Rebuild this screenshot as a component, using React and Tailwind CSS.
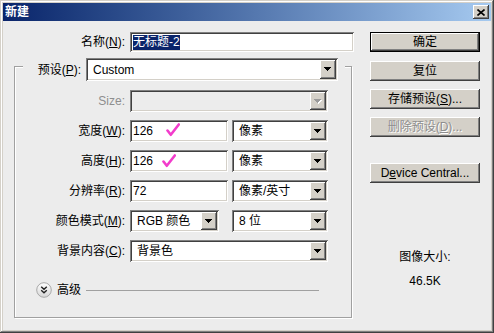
import React from 'react';

// Win classic bevels
const raised = 'shadow-[inset_-1px_-1px_#404040,inset_1px_1px_#ffffff,inset_-2px_-2px_#808080,inset_2px_2px_#d4d0c8]';
const sunken = 'shadow-[inset_1px_1px_#808080,inset_-1px_-1px_#ffffff,inset_2px_2px_#404040,inset_-2px_-2px_#d4d0c8]';

const Arrow = ({ disabled }) => (
    <svg width="8" height="5" viewBox="0 0 8 5" className="block">
        {disabled && (
            <g fill="#ffffff">
                <rect x="1" y="1" width="7" height="1" />
                <rect x="2" y="2" width="5" height="1" />
                <rect x="3" y="3" width="3" height="1" />
                <rect x="4" y="4" width="1" height="1" />
            </g>
        )}
        <g fill={disabled ? '#9a9a9a' : '#000000'}>
            <rect x="0" y="0" width="7" height="1" />
            <rect x="1" y="1" width="5" height="1" />
            <rect x="2" y="2" width="3" height="1" />
            <rect x="3" y="3" width="1" height="1" />
        </g>
    </svg>
);

const Combo = ({ className, value, disabled }) => (
    <div className={`flex items-stretch p-[2px] ${disabled ? 'bg-[#ececec]' : 'bg-white'} ${sunken} ${className}`}>
        <div className="flex-1 flex items-center pl-[5px] whitespace-nowrap leading-[14px]">{value}</div>
        <div className={`w-[16px] bg-[#d4d0c8] flex items-center justify-center ${raised}`}>
            <Arrow disabled={disabled} />
        </div>
    </div>
);

const Input = ({ className, children }) => (
    <div className={`relative flex items-center bg-white pl-[3px] leading-[14px] ${sunken} ${className}`}>
        {children}
    </div>
);

const Check = ({ className }) => (
    <svg width="14" height="14" viewBox="0 0 14 14" className={`absolute ${className}`}>
        <path d="M1.5 7.5 L4.8 11.8 L12.8 1.5" fill="none" stroke="#f23ccb" strokeWidth="2.6" strokeLinecap="round" strokeLinejoin="round" />
    </svg>
);

const Label = ({ children, gray }) => (
    <div className={`w-[115px] pr-[5px] text-right whitespace-nowrap leading-[14px] ${gray ? 'text-[#8e8e8e]' : ''}`}>
        {children}
    </div>
);

const Btn = ({ children, disabled, def }) => (
    <div className={`w-[110px] h-[20px] ${def ? 'border border-black' : ''}`}>
        <div className={`w-full h-full bg-[#d4d0c8] flex items-center justify-center leading-[14px] ${raised} ${disabled ? 'text-[#8e8e8e] [text-shadow:1px_1px_0_#ffffff]' : ''}`}>
            {children}
        </div>
    </div>
);

export default function App() {
    return (
        <div className={`w-[494px] h-[333px] bg-[#d4d0c8] p-[3px] flex flex-col shadow-[inset_-1px_-1px_#404040,inset_1px_1px_#d4d0c8,inset_-2px_-2px_#808080,inset_2px_2px_#ffffff] font-['Liberation_Sans','Noto_Sans_CJK_SC',sans-serif] text-[12px] text-black`}>
            {/* title bar */}
            <div className="h-[18px] flex items-center bg-linear-to-r from-[#0a246a] to-[#a6caf0] pl-[2px] pr-[2px]">
                <span className="font-bold text-white leading-none">新建</span>
                <div className={`ml-auto w-[16px] h-[14px] bg-[#d4d0c8] flex items-center justify-center ${raised}`}>
                    <svg width="8" height="7" viewBox="0 0 8 7" className="block">
                        <path d="M0.5 0.5 L7.5 6.5 M7.5 0.5 L0.5 6.5" stroke="#000" strokeWidth="1.6" />
                    </svg>
                </div>
            </div>

            <div className="flex-1 bg-[#ececec] flex">
                {/* left column */}
                <div className="w-[367px] pt-[11px]">
                    <div className="flex items-center h-[20px]">
                        <div className="w-[127px] pr-[5px] text-right whitespace-nowrap leading-[14px]">名称(<span className="underline">N</span>):</div>
                        <Input className="w-[224px] h-[20px]">
                            <span className="bg-[#0a246a] text-white leading-[15px]">无标题-2</span>
                        </Input>
                    </div>

                    <div className="ml-[11px] mt-[14px] w-[338px] h-[252px] border border-[#a0a0a0] shadow-[inset_1px_1px_#ffffff,1px_1px_#ffffff]">
                        {/* preset row sits over the top edge */}
                        <div className="-mt-[9px] ml-[8px] w-[322px] h-[23px] bg-[#ececec] flex items-center">
                            <div className="w-[63px] pr-[5px] text-right whitespace-nowrap leading-[14px]">预设(<span className="underline">P</span>):</div>
                            <Combo className="w-[252px] h-[23px]" value="Custom" />
                        </div>

                        <div className="mt-[9px] flex items-center h-[22px]">
                            <Label gray>Size:</Label>
                            <Combo className="w-[198px] h-[22px]" value="" disabled />
                        </div>

                        <div className="mt-[8px] flex items-center h-[22px]">
                            <Label>宽度(<span className="underline">W</span>):</Label>
                            <Input className="w-[98px] h-[22px]">
                                126
                                <Check className="left-[36px] top-[3px]" />
                            </Input>
                            <Combo className="ml-[4px] w-[96px] h-[22px]" value="像素" />
                        </div>

                        <div className="mt-[8px] flex items-center h-[22px]">
                            <Label>高度(<span className="underline">H</span>):</Label>
                            <Input className="w-[98px] h-[22px]">
                                126
                                <Check className="left-[32px] top-[4px]" />
                            </Input>
                            <Combo className="ml-[4px] w-[96px] h-[22px]" value="像素" />
                        </div>

                        <div className="mt-[8px] flex items-center h-[22px]">
                            <Label>分辨率(<span className="underline">R</span>):</Label>
                            <Input className="w-[98px] h-[22px]">72</Input>
                            <Combo className="ml-[4px] w-[96px] h-[22px]" value="像素/英寸" />
                        </div>

                        <div className="mt-[8px] flex items-center h-[22px]">
                            <Label>颜色模式(<span className="underline">M</span>):</Label>
                            <Combo className="w-[89px] h-[22px]" value="RGB 颜色" />
                            <Combo className="ml-[13px] w-[96px] h-[22px]" value="8 位" />
                        </div>

                        <div className="mt-[8px] flex items-center h-[22px]">
                            <Label>背景内容(<span className="underline">C</span>):</Label>
                            <Combo className="w-[198px] h-[22px]" value="背景色" />
                        </div>

                        <div className="mt-[20px] ml-[21px] mr-[32px] flex items-center h-[16px]">
                            <svg width="16" height="16" viewBox="0 0 16 16" className="block">
                                <defs>
                                    <linearGradient id="adv" x1="0" y1="0" x2="0" y2="1">
                                        <stop offset="0" stopColor="#ffffff" />
                                        <stop offset="1" stopColor="#d6d6d6" />
                                    </linearGradient>
                                </defs>
                                <circle cx="8" cy="8" r="7.3" fill="url(#adv)" stroke="#a8a8a8" />
                                <path d="M5.2 4.8 L8 7.3 L10.8 4.8 M5.2 8.3 L8 10.8 L10.8 8.3" fill="none" stroke="#222" strokeWidth="1.4" />
                            </svg>
                            <span className="ml-[5px] leading-[14px]">高级</span>
                            <div className="ml-[5px] flex-1 h-px bg-[#a0a0a0]" />
                        </div>
                    </div>
                </div>

                {/* right column */}
                <div className="w-[110px] pt-[11px] flex flex-col items-center">
                    <Btn def>确定</Btn>
                    <div className="mt-[9px]"><Btn>复位</Btn></div>
                    <div className="mt-[8px]"><Btn>存储预设(<span className="underline">S</span>)...</Btn></div>
                    <div className="mt-[8px]"><Btn disabled>删除预设(<span className="underline">D</span>)...</Btn></div>
                    <div className="mt-[26px]"><Btn>D<span className="underline">e</span>vice Central...</Btn></div>
                    <div className="mt-[67px] leading-[14px]">图像大小:</div>
                    <div className="mt-[10px] leading-[14px]">46.5K</div>
                </div>
            </div>
        </div>
    );
}
